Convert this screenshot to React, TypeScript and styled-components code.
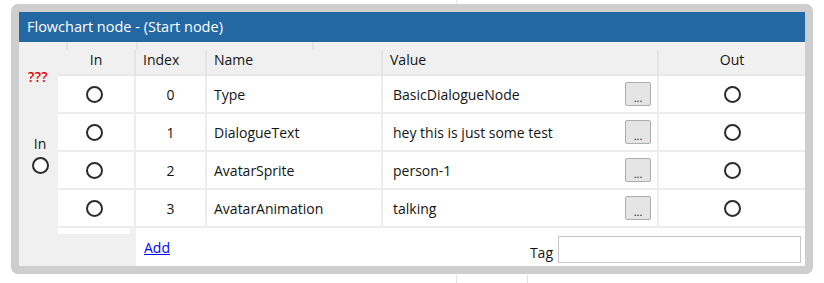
import React from 'react';
import styled, { createGlobalStyle } from 'styled-components';

const GlobalStyle = createGlobalStyle`
  html, body {
    margin: 0;
    padding: 0;
    background: #ffffff;
  }
  body {
    font-family: 'Open Sans', 'Noto Sans', sans-serif;
    font-size: 14px;
    color: #141414;
  }
`;

// faint canvas grid lines behind the node
const Canvas = styled.div`
  width: 824px;
  height: 283px;
  padding: 4px 0 0 11px;
  box-sizing: border-box;
  background-image: linear-gradient(#e2e2e2, #e2e2e2), linear-gradient(#e2e2e2, #e2e2e2),
    linear-gradient(#e2e2e2, #e2e2e2);
  background-size: 1px 5px, 1px 8px, 1px 8px;
  background-position: 456px 0, 456px 275px, 527px 275px;
  background-repeat: no-repeat;
`;

const Frame = styled.div`
  width: 802px;
  height: 270px;
  box-sizing: border-box;
  border: 8px solid #cecece;
  border-radius: 7px;
  background: #f0f0f0;
  display: flex;
  flex-direction: column;
  overflow: hidden;
`;

const TitleBar = styled.div`
  height: 30px;
  line-height: 29px;
  background: #2368a3;
  color: #ffffff;
  padding-left: 8px;
  font-size: 14.5px;
`;

const Body = styled.div`
  flex: 1;
  display: flex;
`;

const SideColumn = styled.div`
  width: 39px;
  display: flex;
  flex-direction: column;
  align-items: center;
`;

const Warning = styled.div`
  color: #e00000;
  font-size: 14px;
  font-weight: 600;
  line-height: 16px;
  margin-top: 27px;
  margin-left: -1px;
  letter-spacing: 0.3px;
`;

const SideLabel = styled.div`
  margin-top: 50px;
  margin-left: 3px;
  line-height: 18px;
`;

const Port = styled.span<{ $size?: number }>`
  display: inline-block;
  width: ${(p) => p.$size ?? 17}px;
  height: ${(p) => p.$size ?? 17}px;
  box-sizing: border-box;
  border: 2px solid #2b2b2b;
  border-radius: 50%;
  background: #ffffff;
`;

const SidePort = styled(Port)`
  margin-top: 4px;
  margin-left: 3px;
`;

const GridArea = styled.div`
  flex: 1;
  display: flex;
  flex-direction: column;
`;

const columns = '78px 71px 176px 276px 1fr';

const TopStrip = styled.div`
  height: 8px;
  display: grid;
  grid-template-columns: 8px 70px 176px 1fr;
`;

const Tick = styled.div<{ $line?: boolean }>`
  border-left: ${(p) => (p.$line ? '2px solid #e4e4e4' : 'none')};
`;

const HeaderRow = styled.div`
  height: 24px;
  display: grid;
  grid-template-columns: ${columns};
  border-bottom: 2px solid #e6e6e6;
`;

const HeaderCell = styled.div<{ $center?: boolean }>`
  display: flex;
  align-items: center;
  justify-content: ${(p) => (p.$center ? 'center' : 'flex-start')};
  padding-left: ${(p) => (p.$center ? '0' : '7px')};
  padding-bottom: 6px;
  border-right: 2px solid #e4e4e4;
  &:last-child {
    border-right: none;
  }
`;

const Row = styled.div`
  height: 36px;
  display: grid;
  grid-template-columns: ${columns};
  background: #ffffff;
  border-bottom: 2px solid #ececec;
`;

const Cell = styled.div<{ $align?: 'left' | 'center' }>`
  display: flex;
  align-items: center;
  justify-content: ${(p) => (p.$align === 'center' ? 'center' : 'flex-start')};
  padding-left: ${(p) => (p.$align === 'center' ? '0' : '7px')};
  border-right: 2px solid #ececec;
  &:last-child {
    border-right: none;
  }
`;

const PortCell = styled(Cell)`
  padding-right: 3px;
`;

const ValueCell = styled(Cell)`
  justify-content: space-between;
  padding-left: 10px;
  padding-right: 6px;
`;

const DotsButton = styled.button`
  width: 26px;
  height: 24px;
  box-sizing: border-box;
  border: 1px solid #adadad;
  border-radius: 2px;
  background: #e5e5e5;
  font-family: inherit;
  font-size: 11px;
  line-height: 12px;
  padding: 8px 0 0;
  color: #1a1a1a;
`;

const Footer = styled.div`
  flex: 1;
  display: grid;
  grid-template-columns: 72px 6px 1fr;
`;

const FooterGutter = styled.div`
  border-top: 6px solid #ffffff;
`;

const FooterMain = styled.div`
  background: #ffffff;
  display: flex;
  align-items: flex-end;
  padding: 0 4px 3px 8px;
`;

const AddLink = styled.a`
  color: #0000ff;
  text-decoration: underline;
  margin-bottom: 6px;
  cursor: pointer;
`;

const TagLabel = styled.span`
  margin-left: auto;
  margin-right: 5px;
  margin-bottom: 1px;
`;

const TagInput = styled.input`
  width: 243px;
  height: 27px;
  box-sizing: border-box;
  border: 1px solid #c8c8c8;
  background: #ffffff;
  outline: none;
`;

const rows = [
  { index: 0, name: 'Type', value: 'BasicDialogueNode' },
  { index: 1, name: 'DialogueText', value: 'hey this is just some test' },
  { index: 2, name: 'AvatarSprite', value: 'person-1' },
  { index: 3, name: 'AvatarAnimation', value: 'talking' },
];

export default function App() {
  return (
    <>
      <GlobalStyle />
      <Canvas>
        <Frame>
          <TitleBar>Flowchart node - (Start node)</TitleBar>
          <Body>
            <SideColumn>
              <Warning>???</Warning>
              <SideLabel>In</SideLabel>
              <SidePort />
            </SideColumn>
            <GridArea>
              <TopStrip>
                <Tick />
                <Tick $line />
                <Tick $line />
                <Tick $line />
              </TopStrip>
              <HeaderRow>
                <HeaderCell $center>In</HeaderCell>
                <HeaderCell>Index</HeaderCell>
                <HeaderCell>Name</HeaderCell>
                <HeaderCell>Value</HeaderCell>
                <HeaderCell $center>Out</HeaderCell>
              </HeaderRow>
              {rows.map((r) => (
                <Row key={r.index}>
                  <PortCell $align='center'>
                    <Port />
                  </PortCell>
                  <Cell $align='center'>{r.index}</Cell>
                  <Cell>{r.name}</Cell>
                  <ValueCell>
                    <span>{r.value}</span>
                    <DotsButton>...</DotsButton>
                  </ValueCell>
                  <Cell $align='center'>
                    <Port />
                  </Cell>
                </Row>
              ))}
              <Footer>
                <FooterGutter />
                <div />
                <FooterMain>
                  <AddLink>Add</AddLink>
                  <TagLabel>Tag</TagLabel>
                  <TagInput />
                </FooterMain>
              </Footer>
            </GridArea>
          </Body>
        </Frame>
      </Canvas>
    </>
  );
}
